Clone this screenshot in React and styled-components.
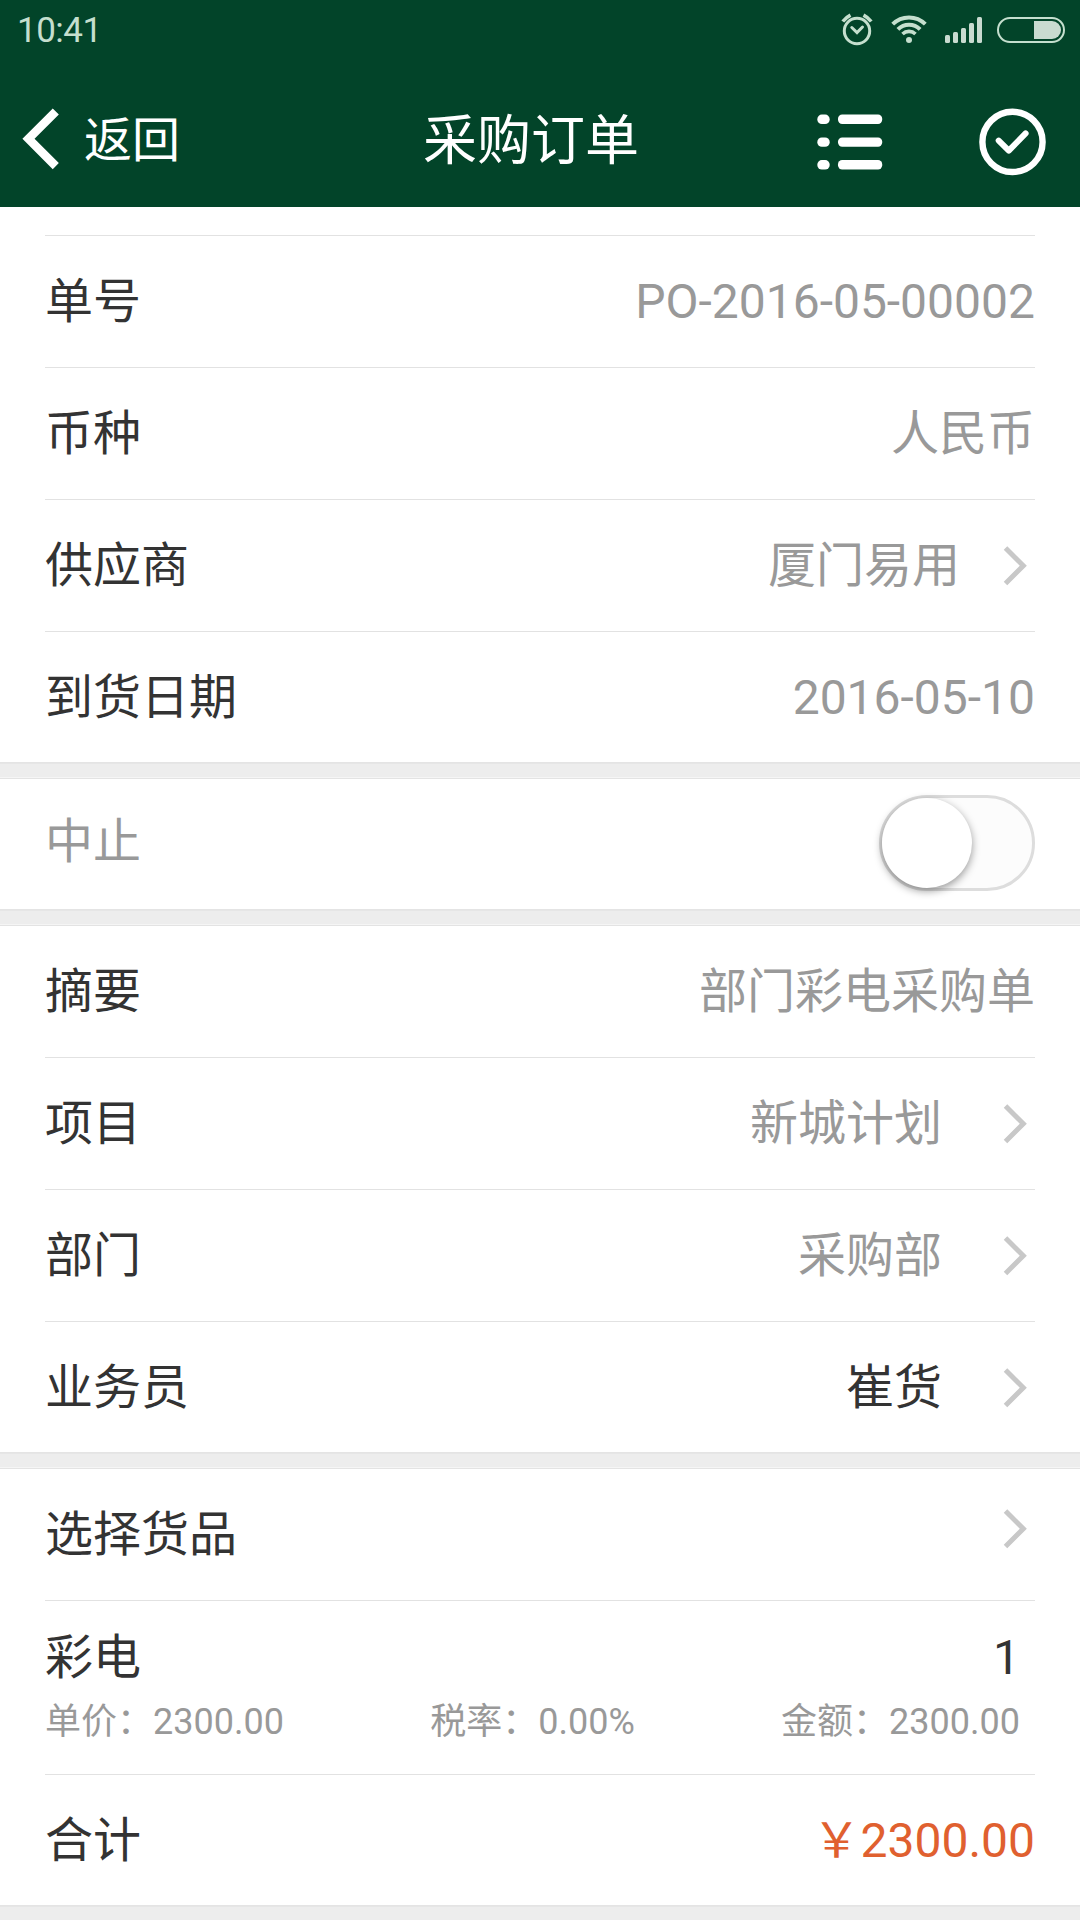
import React, { useState } from 'react'
import styled, { createGlobalStyle } from 'styled-components'

const GlobalStyle = createGlobalStyle`
    * {
        box-sizing: border-box;
    }

    body {
        margin: 0;
        background-color: #ededed;
        font-family: Roboto, "Noto Sans CJK SC", sans-serif;
    }
`

const Page = styled.div`
    width: 1080px;
    height: 1920px;
    overflow: hidden;
    display: flex;
    flex-direction: column;
    gap: 15px;
    background-color: #ededed;
    color: #333;
    font-size: 48px;
    line-height: 70px;
`

const Top = styled.div`
    display: flex;
    flex-direction: column;
`

const AppHeader = styled.header`
    height: 207px;
    display: flex;
    flex-direction: column;
    background-color: #024429;
    color: #fff;
`

const StatusBar = styled.div`
    height: 60px;
    padding: 0 15px 0 17px;
    display: flex;
    align-items: center;
    justify-content: space-between;
    color: #c5dfce;
`

const Clock = styled.span`
    font-size: 35px;
    line-height: 60px;
    letter-spacing: -0.5px;
    padding-top: 2px;
`

const StatusIcons = styled.svg`
    width: 230px;
    height: 60px;
`

const NavBar = styled.div`
    height: 147px;
    padding: 10px 34px 0 21px;
    display: grid;
    grid-template-columns: 400px 1fr 400px;
    align-items: start;
`

const BackButton = styled.button`
    height: 138px;
    padding: 0;
    border: 0;
    background: none;
    color: inherit;
    font: inherit;
    display: flex;
    align-items: center;
    gap: 23px;
`

const BackText = styled.span`
    padding-top: 3px;
`

const Title = styled.h1`
    height: 137px;
    margin: 0;
    padding-top: 4px;
    padding-right: 5px;
    font-size: 54px;
    font-weight: 400;
    line-height: 136px;
    text-align: center;
    white-space: nowrap;
`

const Actions = styled.div`
    height: 137px;
    padding-top: 7px;
    display: flex;
    align-items: center;
    justify-content: flex-end;
    gap: 95px;
`

const Section = styled.section`
    background-color: #fff;
    padding: 0 45px;
    border-top: ${(props) => (props.$first ? '0' : '1px solid #e3e3e3')};
    border-bottom: 1px solid #e4e4e4;
    box-shadow: 0 1px 0 #e6e6e6${(props) => (props.$first ? '' : ', 0 -1px 0 #f5f5f5')};
`

const Stub = styled.div`
    height: 29px;
    border-bottom: 1px solid #e2e2e2;
`

const Row = styled.div`
    height: 132px;
    display: flex;
    align-items: center;
    justify-content: space-between;
    border-bottom: 1px solid #e2e2e2;

    &:last-child {
        height: 130px;
        padding-top: 2px;
        border-bottom: 0;
    }
`

const SwitchRow = styled(Row)`
    &:last-child {
        padding: 0 0 2px;
    }
`

const Label = styled.span`
    color: #333;
`

const MutedLabel = styled(Label)`
    padding-bottom: 2px;
    color: #999;
`

const Value = styled.span`
    margin-left: auto;
    margin-right: ${(props) => props.$space || 0}px;
    color: ${(props) => props.$color || '#999'};
`

const Arrow = styled.svg`
    width: 24px;
    height: 40px;
    margin-right: 8px;
    margin-bottom: ${(props) => props.$lift || 0}px;
`

const Switch = styled.button`
    width: 156px;
    height: 96px;
    padding: 0;
    border: 3px solid #ddd;
    border-radius: 48px;
    background-color: #fcfcfc;
    display: flex;
    justify-content: ${(props) => (props.$on ? 'flex-end' : 'flex-start')};
`

const Knob = styled.span`
    width: 90px;
    height: 90px;
    border-radius: 50%;
    background-color: #fff;
    box-shadow: 0 3px 9px rgba(0, 0, 0, 0.4);
`

const Product = styled.div`
    height: 174px;
    padding: 22px 15px 0 0;
    border-bottom: 1px solid #e2e2e2;
`

const ProductLine = styled.div`
    display: flex;
    justify-content: space-between;
`

const Detail = styled(ProductLine)`
    color: #999;
    font-size: 36px;
    line-height: 58px;
`

const basicInfo = [
    { label: '单号', value: 'PO-2016-05-00002' },
    { label: '币种', value: '人民币' },
    { label: '供应商', value: '厦门易用', arrow: true, space: 43 },
    { label: '到货日期', value: '2016-05-10' },
]

const orderInfo = [
    { label: '摘要', value: '部门彩电采购单' },
    { label: '项目', value: '新城计划', arrow: true, space: 61 },
    { label: '部门', value: '采购部', arrow: true, space: 61 },
    { label: '业务员', value: '崔货', arrow: true, space: 61, color: '#333' },
]

const RightArrow = ({ lift }) => (
    <Arrow viewBox="0 0 24 40" $lift={lift}>
        <path d="M2.5 2 L20.3 19.7 L2.5 37.4" fill="none" stroke="#c8c8c8" strokeWidth="5" />
    </Arrow>
)

const Rows = ({ items }) =>
    items.map((item) => (
        <Row key={item.label}>
            <Label>{item.label}</Label>
            <Value $space={item.space} $color={item.color}>{item.value}</Value>
            {item.arrow && <RightArrow />}
        </Row>
    ))

const signal = [35, 32, 28, 23, 17]

const Status = () => (
    <StatusBar>
        <Clock>10:41</Clock>
        <StatusIcons viewBox="835 0 230 60" fill="none" stroke="currentColor">
            {/* alarm */}
            <circle cx="857" cy="31" r="12.7" strokeWidth="3" />
            <path d="M851.8 27.5 L857 32.6 L862.5 27" strokeWidth="3" strokeLinecap="round" />
            <path d="M842.8 21.5 Q846 17.5 850.5 15.2 M871.2 21.5 Q868 17.5 863.5 15.2" strokeWidth="3.6" />
            {/* wifi */}
            <path d="M892.7 24.2 A23 23 0 0 1 925.3 24.2" strokeWidth="4" />
            <path d="M897.9 29.4 A15.8 15.8 0 0 1 920.1 29.4" strokeWidth="4" />
            <path d="M902.5 34 A9.4 9.4 0 0 1 915.5 34" strokeWidth="3.6" />
            <circle cx="909" cy="40" r="3" fill="currentColor" stroke="none" />
            {signal.map((y, i) => (
                <rect key={y} x={945 + i * 8} y={y} width="5" height={43 - y} rx="1.5" fill="#c9dbd0" stroke="none" />
            ))}
            {/* battery */}
            <rect x="998" y="18" width="66" height="24" rx="12" strokeWidth="2" />
            <path d="M1034 21 H1052 A9 9 0 0 1 1052 39 H1034 Z" fill="#c9dbd0" stroke="none" />
        </StatusIcons>
    </StatusBar>
)

const App = () => {
    const [stopped, setStopped] = useState(false)

    return (
        <>
            <GlobalStyle />
            <Page>
                <Top>
                    <AppHeader>
                        <Status />
                        <NavBar>
                            <BackButton>
                                <svg width="40" height="64" viewBox="0 0 40 64">
                                    <path d="M34.8 4.5 L7.5 31.8 L34.8 59.1" fill="none" stroke="#fff" strokeWidth="8.6" />
                                </svg>
                                <BackText>返回</BackText>
                            </BackButton>
                            <Title>采购订单</Title>
                            <Actions>
                                <svg width="66" height="56" viewBox="0 0 66 56" fill="#fff">
                                    {[0.6, 23.4, 46.1].map((y) => (
                                        <g key={y}>
                                            <rect x="0.3" y={y} width="12.4" height="9.4" rx="4.6" />
                                            <rect x="21" y={y} width="44.2" height="9.4" rx="4.2" />
                                        </g>
                                    ))}
                                </svg>
                                <svg width="68" height="68" viewBox="0 0 68 68" fill="none" stroke="#fff" strokeWidth="6.4">
                                    <circle cx="34.5" cy="33.9" r="30.1" />
                                    <path d="M20.7 32.6 L30.8 42.6 L47.6 25.4" strokeWidth="6" strokeLinecap="round" strokeLinejoin="round" />
                                </svg>
                            </Actions>
                        </NavBar>
                    </AppHeader>
                    <Section $first>
                        <Stub />
                        <Rows items={basicInfo} />
                    </Section>
                </Top>

                <Section>
                    <SwitchRow>
                        <MutedLabel>中止</MutedLabel>
                        <Switch $on={stopped} onClick={() => setStopped(!stopped)}>
                            <Knob />
                        </Switch>
                    </SwitchRow>
                </Section>

                <Section>
                    <Rows items={orderInfo} />
                </Section>

                <Section>
                    <Row>
                        <Label>选择货品</Label>
                        <RightArrow lift={12} />
                    </Row>
                    <Product>
                        <ProductLine>
                            <span>彩电</span>
                            <span>1</span>
                        </ProductLine>
                        <Detail>
                            <span>单价：2300.00</span>
                            <span>税率：0.00%</span>
                            <span>金额：2300.00</span>
                        </Detail>
                    </Product>
                    <Row>
                        <Label>合计</Label>
                        <Value $color="#e0602f">￥2300.00</Value>
                    </Row>
                </Section>
            </Page>
        </>
    )
}

export default App
